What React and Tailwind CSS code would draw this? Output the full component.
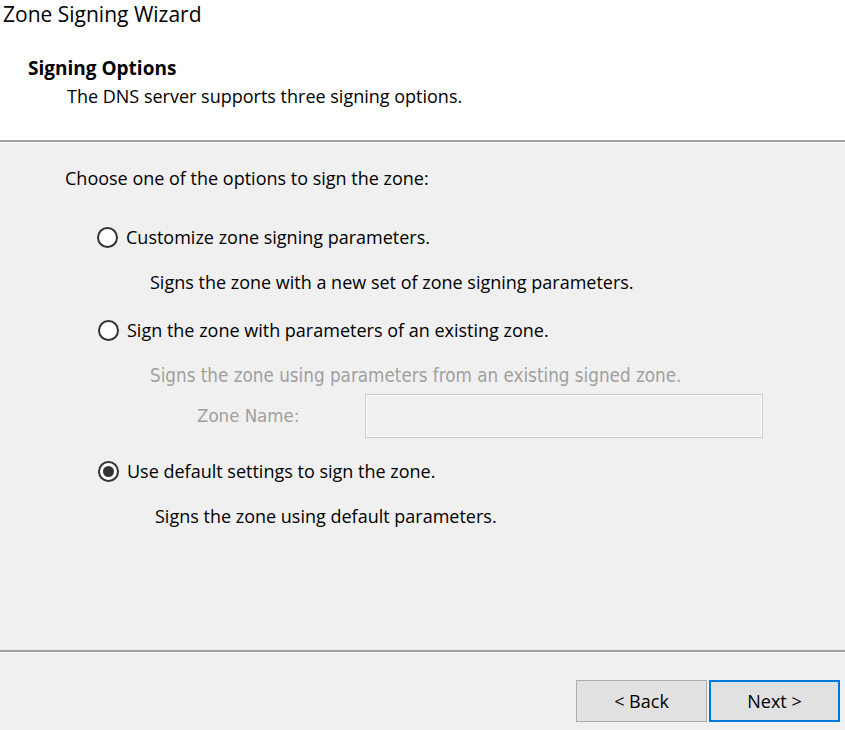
import { useState } from "react";

function Radio({ checked }) {
  return (
    <span className="flex h-[21px] w-[21px] shrink-0 items-center justify-center rounded-full border-2 border-[#333333] bg-white">
      {checked && <span className="h-[11px] w-[11px] rounded-full bg-[#333333]" />}
    </span>
  );
}

export default function App() {
  const [choice, setChoice] = useState("default");

  return (
    <div className="flex h-[730px] w-[845px] flex-col overflow-hidden bg-[#f0f0f0] text-[18px] text-black [font-family:'Open_Sans',sans-serif]">
      {/* Header */}
      <div className="h-[140px] shrink-0 bg-white">
        <div className="pl-[3px] text-[21px] leading-[28px]">Zone Signing Wizard</div>
        <div className="mt-[28px] pl-[28px] text-[19px] font-bold leading-[24px]">Signing Options</div>
        <div className="mt-[4px] pl-[67px] leading-[24px]">The DNS server supports three signing options.</div>
      </div>
      <div className="h-[2px] shrink-0 bg-[#a0a0a0]" />
      <div className="h-px shrink-0 bg-white" />

      {/* Body */}
      <div className="flex-1 pl-[65px] pt-[23px]">
        <div className="leading-[24px]">Choose one of the options to sign the zone:</div>

        <button
          onClick={() => setChoice("custom")}
          className="mt-[35px] ml-[32px] flex items-center gap-[8px] leading-[24px]"
        >
          <Radio checked={choice === "custom"} />
          <span>Customize zone signing parameters.</span>
        </button>
        <div className="mt-[21px] pl-[85px] leading-[24px]">Signs the zone with a new set of zone signing parameters.</div>

        <button
          onClick={() => setChoice("existing")}
          className="mt-[24px] ml-[33px] flex items-center gap-[8px] leading-[24px]"
        >
          <Radio checked={choice === "existing"} />
          <span>Sign the zone with parameters of an existing zone.</span>
        </button>
        <div className="mt-[22px] pl-[85px] text-[18.7px] leading-[24px] text-[#a0a0a0] [font-family:'DejaVu_Sans_Condensed','Liberation_Sans',sans-serif]">
          Signs the zone using parameters from an existing signed zone.
        </div>
        <div className="mt-[6px] flex items-center">
          <span className="w-[300px] pl-[132px] text-[18.5px] text-[#a0a0a0] [font-family:'DejaVu_Sans_Condensed','Liberation_Sans',sans-serif]">Zone Name:</span>
          <div className="h-[44px] w-[398px] border border-[#cccccc] bg-[#f0f0f0] shadow-[inset_0_0_0_1px_#ffffff]" />
        </div>

        <button
          onClick={() => setChoice("default")}
          className="mt-[21px] ml-[33px] flex items-center gap-[8px] leading-[24px]"
        >
          <Radio checked={choice === "default"} />
          <span>Use default settings to sign the zone.</span>
        </button>
        <div className="mt-[21px] pl-[90px] leading-[24px]">Signs the zone using default parameters.</div>
      </div>

      {/* Footer */}
      <div className="h-[2px] shrink-0 bg-[#a0a0a0]" />
      <div className="h-px shrink-0 bg-white" />
      <div className="flex h-[77px] shrink-0 items-start justify-end gap-[2px] pr-[5px] pt-[27px]">
        <button className="h-[42px] w-[131px] border border-[#adadad] bg-[#e1e1e1] text-[18px]">&lt; Back</button>
        <button className="h-[42px] w-[131px] border-2 border-[#0078d7] bg-[#e1e1e1] text-[18px]">Next &gt;</button>
      </div>
    </div>
  );
}
